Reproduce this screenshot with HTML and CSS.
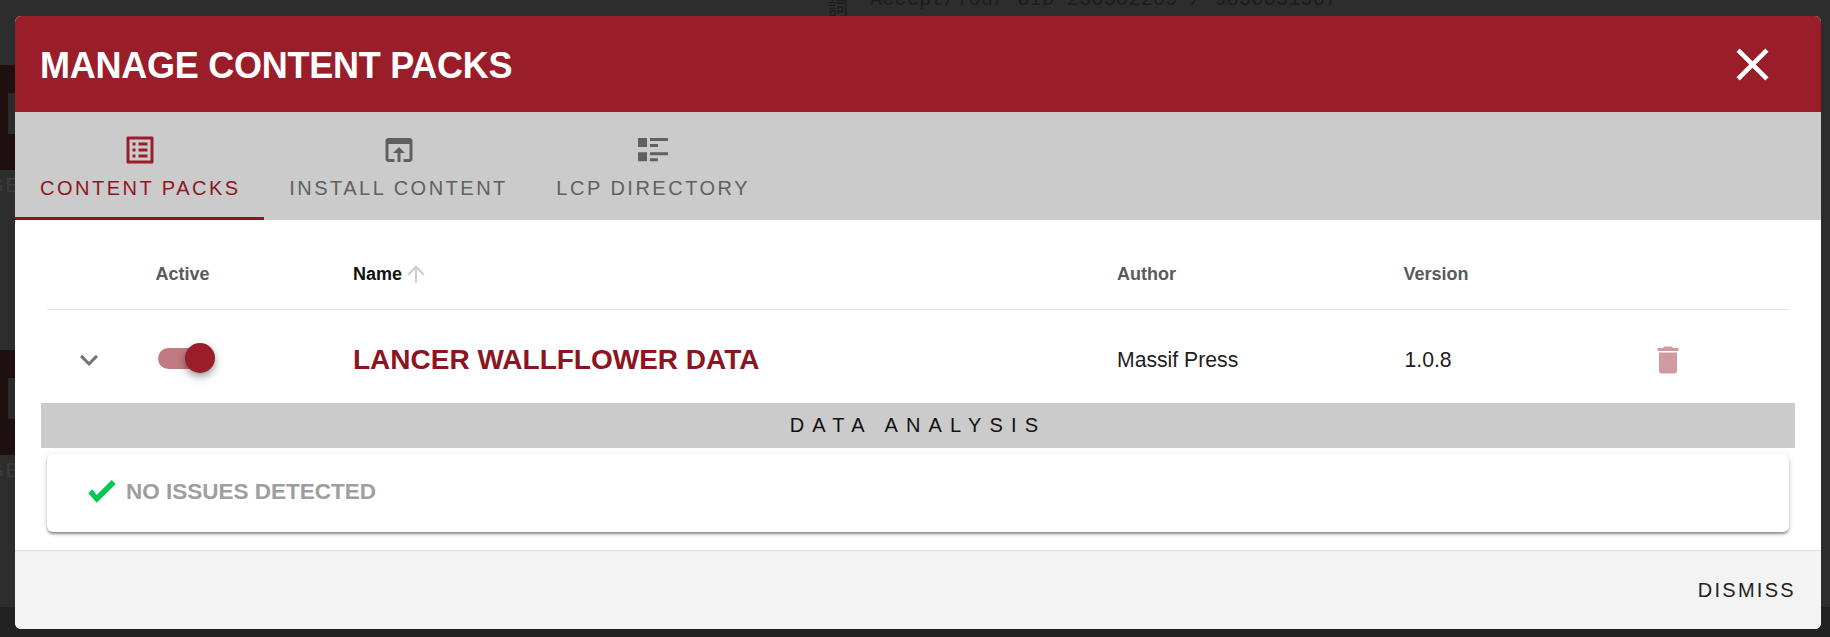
FILE: index.html
```html
<!DOCTYPE html>
<html lang="en">
<head>
<meta charset="utf-8">
<title>Manage Content Packs</title>
<link rel="stylesheet" href="styles.css">
</head>
<body>
<div class="backdrop">
  <div class="ghost-top"><span class="ghost-glyph">詞</span><span class="ghost-url">Accept/Your UID 230502209 / 9850031567</span></div>
  <div class="ghost-side">
    <div class="ghost-card"><div class="ghost-inner"></div></div>
    <div class="ghost-label">GE</div>
    <div class="ghost-card second"><div class="ghost-inner"></div></div>
    <div class="ghost-label">GE</div>
  </div>
  <div class="ghost-bottom">side from the / and the main text of the</div>
</div>
<section class="modal">
  <header class="modal-head">
    <h1 class="modal-title">MANAGE CONTENT PACKS</h1>
    <svg class="close-icon" viewBox="0 0 24 24"><path d="M19 6.41L17.59 5 12 10.59 6.41 5 5 6.41 10.59 12 5 17.59 6.41 19 12 13.41 17.59 19 19 17.59 13.41 12z"/></svg>
  </header>
  <nav class="tabs">
    <div class="tab active">
      <svg class="tab-icon" viewBox="0 0 24 24"><path d="M19 5v14H5V5h14m1.1-2H3.9c-.5 0-.9.4-.9.9v16.2c0 .4.4.9.9.9h16.2c.4 0 .9-.5.9-.9V3.9c0-.5-.5-.9-.9-.9zM11 7h6v2h-6V7zm0 4h6v2h-6v-2zm0 4h6v2h-6zM7 7h2v2H7zm0 4h2v2H7zm0 4h2v2H7z"/></svg>
      <span class="tab-label">CONTENT PACKS</span>
    </div>
    <div class="tab">
      <svg class="tab-icon" viewBox="0 0 24 24"><path d="M19 4H5c-1.11 0-2 .9-2 2v12c0 1.1.89 2 2 2h4v-2H5V8h14v10h-4v2h4c1.1 0 2-.9 2-2V6c0-1.1-.89-2-2-2zm-7 6l-4 4h3v6h2v-6h3l-4-4z"/></svg>
      <span class="tab-label">INSTALL CONTENT</span>
    </div>
    <div class="tab">
      <svg class="tab-icon" viewBox="0 0 24 24"><path d="M2 4h6v6H2zM10 4h12v2H10zM10 8h5.3v2H10zM2 13.5h6v6H2zM10 13.5h12v2H10zM10 17.5h5.3v2H10z"/></svg>
      <span class="tab-label">LCP DIRECTORY</span>
    </div>
  </nav>
  <div class="modal-body">
    <div class="table-grid table-head">
      <span></span>
      <span class="th">Active</span>
      <span class="th sorted">Name<svg class="sort-icon" viewBox="0 0 24 24"><path d="M4 12l1.41 1.41L11 7.83V20h2V7.83l5.58 5.59L20 12l-8-8-8 8z"/></svg></span>
      <span class="th">Author</span>
      <span class="th">Version</span>
      <span></span>
    </div>
    <div class="table-grid table-row">
      <svg class="chevron" viewBox="0 0 24 24"><path d="M7.41 8.58L12 13.17l4.59-4.59L18 10l-6 6-6-6 1.41-1.42z"/></svg>
      <div class="toggle"><span class="thumb"></span></div>
      <span class="pack-name">LANCER WALLFLOWER DATA</span>
      <span class="cell">Massif Press</span>
      <span class="cell version">1.0.8</span>
      <svg class="trash" viewBox="0 0 24 24"><path d="M19 4h-3.5l-1-1h-5l-1 1H5v2h14M6 19a2 2 0 0 0 2 2h8a2 2 0 0 0 2-2V7H6v12z"/></svg>
    </div>
    <div class="band">DATA ANALYSIS</div>
    <div class="result-card">
      <svg class="check" viewBox="0 0 28 23"><path d="M0.3 13.3L8.7 22.7 27.7 4 23.7 0 8.7 15 4.3 9.3z"/></svg>
      <span class="result-text">NO ISSUES DETECTED</span>
    </div>
  </div>
  <footer class="modal-foot">
    <span class="dismiss">DISMISS</span>
  </footer>
</section>
</body>
</html>
```
FILE: styles.css
```css
* { box-sizing: border-box; }
html, body { margin: 0; padding: 0; height: 100%; }
body {
  font-family: "Liberation Sans", Arial, sans-serif;
  background: #2d2d2d;
  overflow: hidden;
  position: relative;
}
.backdrop { height: 637px; display: flex; flex-direction: column; position: relative; overflow: hidden; }
.ghost-top {
  height: 3px;
  padding-left: 828px;
  display: flex;
  color: #1c1c1c;
  white-space: nowrap;
}
.ghost-glyph { font-family: "Noto Sans CJK TC", sans-serif; font-size: 20px; line-height: 16px; }
.ghost-url {
  margin-left: 22px;
  font-family: "Liberation Mono", monospace;
  font-size: 20px;
  letter-spacing: .3px;
  line-height: 0;
}
.ghost-side { width: 15px; height: 626px; padding-top: 62px; overflow: hidden; display: flex; flex-direction: column; }
.ghost-card { height: 105px; background: #1f1010; padding-top: 28px; flex: none; }
.ghost-card.second { margin-top: 150px; }
.ghost-inner { height: 41px; margin-left: 8px; background: #2b2b2b; }
.ghost-label { color: #3c3c3c; font-size: 20px; letter-spacing: 2px; line-height: 30px; margin-left: -12px; white-space: nowrap; }
.ghost-bottom {
  flex: 1;
  background: #222;
  color: #111;
  font-family: "Liberation Mono", monospace;
  font-size: 20px;
  letter-spacing: 8px;
  line-height: 30px;
  padding-left: 840px;
  white-space: nowrap;
}

.modal {
  position: absolute;
  left: 15px;
  top: 16px;
  width: 1806px;
  height: 613px;
  display: flex;
  flex-direction: column;
  border-radius: 6px;
  overflow: hidden;
  background: #fff;
}
.modal-head {
  height: 96px;
  flex: none;
  background: #9a1e2a;
  display: flex;
  align-items: center;
  justify-content: space-between;
  padding: 0 41px 0 25px;
}
.modal-title { margin: 4px 0 0; color: #fff; font-size: 36px; font-weight: 700; letter-spacing: -0.25px; line-height: 44px; }
.close-icon { width: 55px; height: 55px; fill: #fff; display: block; }

.tabs { height: 108px; flex: none; background: #cbcbcb; display: flex; }
.tab {
  display: flex;
  flex-direction: column;
  align-items: center;
  padding: 20px 23.5px 0 25px;
  color: #606060;
  fill: #606060;
}
.tab.active { color: #8e1621; fill: #9a1e2a; border-bottom: 3px solid #8e1621; }
.tab-icon { width: 36px; height: 36px; display: block; flex: none; }
.tab-label { margin-top: 8px; font-size: 20px; line-height: 24px; letter-spacing: 2.5px; white-space: nowrap; }

.modal-body { flex: 1; padding: 0 32px; display: flex; flex-direction: column; min-height: 0; }
.table-grid {
  display: grid;
  grid-template-columns: 108.5px 197.5px 764px 286.5px 246.5px 1fr;
  align-items: center;
  flex: none;
}
.table-head { height: 90px; padding-top: 18px; border-bottom: 1px solid #e0e0e0; }
.th { font-size: 18px; font-weight: 700; color: #5a5a5a; line-height: 24px; }
.th.sorted { color: #111; display: flex; align-items: center; gap: 0; }
.sort-icon { width: 26px; height: 26px; fill: #cfcfcf; display: block; flex: none; margin-left: 1px; }
.table-row { height: 93px; padding-top: 6px; }
.chevron { width: 36px; height: 36px; fill: #757575; display: block; margin-left: 24px; }
.toggle {
  position: relative;
  width: 49px;
  height: 21px;
  margin: -3px 0 0 2.5px;
  border-radius: 11px;
  background: #c27a82;
}
.thumb {
  position: absolute;
  right: -8px;
  top: -5px;
  width: 30px;
  height: 30px;
  border-radius: 50%;
  background: #9a1e2a;
  box-shadow: 0 3px 6px rgba(0,0,0,.3), 0 5px 12px rgba(0,0,0,.14);
}
.pack-name { font-size: 28px; font-weight: 700; color: #8b1520; line-height: 34px; white-space: nowrap; }
.cell { font-size: 21.2px; color: #1d1d1d; line-height: 28px; }
.cell.version { padding-left: 1px; }
.trash { width: 36px; height: 36px; fill: #d19aa0; display: block; }

.band {
  flex: none;
  height: 45px;
  margin: 0 -6px;
  background: #cbcbcb;
  color: #111;
  font-size: 20px;
  letter-spacing: 8.2px;
  line-height: 45px;
  text-align: center;
}
.result-card {
  flex: none;
  height: 78px;
  margin-top: 6px;
  border-radius: 6px;
  background: #fff;
  display: flex;
  align-items: center;
  padding: 0 0 4px 41px;
  box-shadow: 0 3px 3px -2px rgba(0,0,0,.25), 0 2px 3px rgba(0,0,0,.3), 0 1px 8px rgba(0,0,0,.08);
}
.check { width: 28px; height: 23px; fill: #00c853; display: block; flex: none; }
.result-text { margin: 2px 0 0 10px; font-size: 22.5px; font-weight: 700; color: #9e9e9e; line-height: 28px; }

.modal-foot {
  flex: none;
  height: 79px;
  margin-top: auto;
  background: #f3f3f3;
  border-top: 1px solid #e0e0e0;
  display: flex;
  align-items: center;
  justify-content: flex-end;
  padding: 0 25px 0 0;
}
.dismiss { font-size: 20px; letter-spacing: 2.3px; color: #222; line-height: 24px; }
```
